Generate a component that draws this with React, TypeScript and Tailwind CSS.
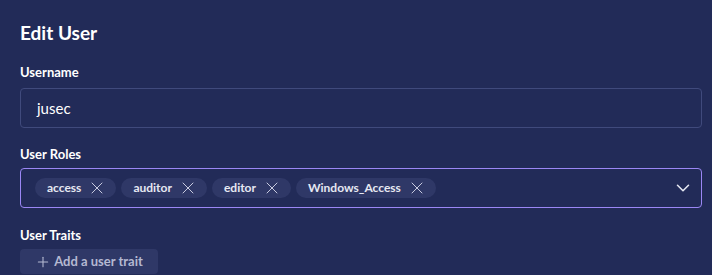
import { ChevronDown, X, Plus } from "lucide-react";

const roles = ["access", "auditor", "editor", "Windows_Access"];

export default function App() {
  return (
    <div
      className="w-[712px] h-[275px] overflow-hidden bg-[#222b58] pl-5 pr-[10px] pt-[22px] text-white"
      style={{ fontFamily: 'Lato, "Noto Sans", sans-serif' }}
    >
      <h1 className="text-[19px] font-bold leading-[22px]">Edit User</h1>

      {/* Username */}
      <div className="mt-[20px]">
        <label className="block text-[13px] font-bold leading-4">Username</label>
        <div className="mt-[8px] h-[40px] rounded border border-[#404a7c] flex items-center px-4 text-[15px]">
          jusec
        </div>
      </div>

      {/* Roles */}
      <div className="mt-[18px]">
        <label className="block text-[13px] font-bold leading-4">User Roles</label>
        <div className="mt-[6px] h-[40px] rounded border border-[#9b87f5] flex items-center pl-[14px] pr-[7px]">
          <div className="flex flex-1 gap-[5px]">
            {roles.map(r => (
              <span
                key={r}
                className="h-[20px] rounded-full bg-[#2f3867] flex items-center gap-[6px] pl-3 pr-[9px] text-[12px] font-bold text-[#e6e8f2]"
              >
                {r}
                <X size={20} strokeWidth={1.2} className="text-[#c8cbe0]" />
              </span>
            ))}
          </div>
          <ChevronDown size={22} strokeWidth={1.7} className="text-[#e6e8f2]" />
        </div>
      </div>

      {/* Traits */}
      <div className="mt-[19px]">
        <label className="block text-[13px] font-bold leading-4">User Traits</label>
        <button className="mt-[6px] h-[25px] w-[138px] rounded bg-[#2f3867] flex items-center justify-center gap-[3px] text-[13px] font-bold text-[#b5b9d2]">
          <Plus size={16} strokeWidth={1.6} />
          Add a user trait
        </button>
      </div>
    </div>
  );
}
